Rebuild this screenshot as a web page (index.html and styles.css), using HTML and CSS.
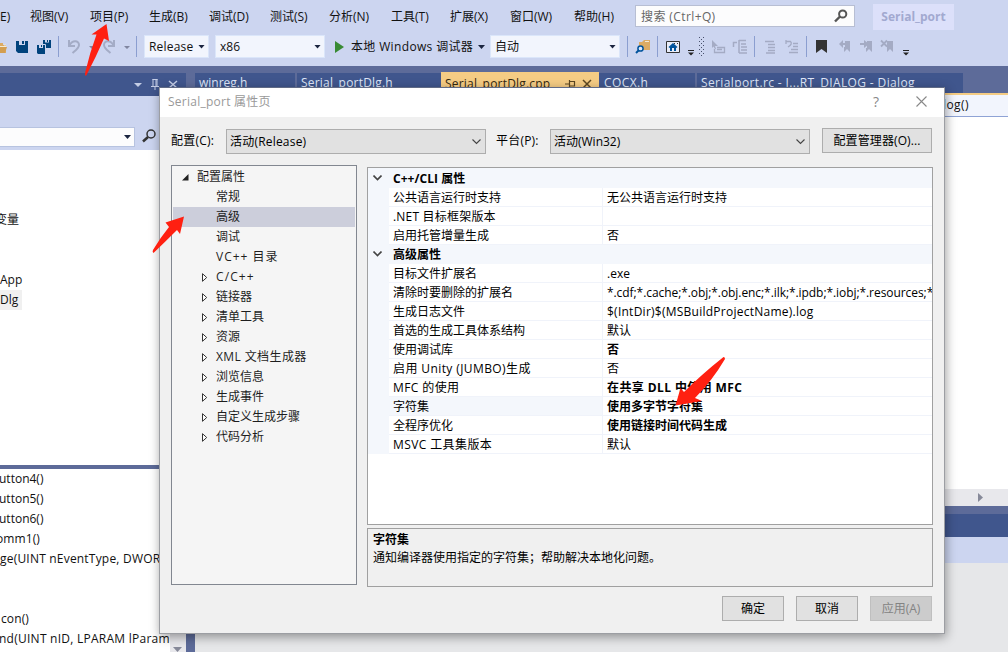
FILE: index.html
```html
<!DOCTYPE html>
<html lang="zh-CN">
<head>
<meta charset="utf-8">
<title>Serial_port 属性页</title>
<link rel="stylesheet" href="styles.css">
</head>
<body>
<div class="ide">
  <header class="top">
    <nav class="menu">
      <span class="m-edit">E)</span><span class="m60">视图(V)</span><span class="m59">项目(P)</span><span class="m60">生成(B)</span><span class="m61">调试(D)</span><span class="m59">测试(S)</span><span class="m62">分析(N)</span><span class="m59">工具(T)</span><span class="m60">扩展(X)</span><span class="m64">窗口(W)</span><span class="m61">帮助(H)</span>
      <div class="quick"><span class="sp4">搜索 (Ctrl+Q)</span>
        <svg width="14" height="14" viewBox="0 0 14 14"><circle cx="8.700" cy="5" r="3.600" fill="none" stroke="#555" stroke-width="2"/><path d="M6 7.500L1 12.500" stroke="#555" stroke-width="2.400"/></svg>
      </div>
      <b class="solution">Serial_port</b>
    </nav>
    <div class="tools">
      <svg class="icons-a" width="144" height="32" viewBox="0 0 144 32">
        <path d="M-2 10H3V12H6V20H-2Z" fill="#dcab63"/><path d="M0 14H7L5 20H0Z" fill="#d39e50"/><path d="M0 13.500H6M5 13V11" fill="none" stroke="#f4ead6"/>
        <path d="M16 8H28V20H18L16 18Z" fill="#00437d"/><path d="M19 8H25V12H19Z" fill="#ccd5f0"/><path d="M22 8H24V11H22Z" fill="#00437d"/>
        <path d="M43 7H51V15H43Z M37 12H45V21H38L37 20Z" fill="#00437d"/><path d="M45 7H49V9.500H45Z M39 12H43V15H39Z" fill="#ccd5f0"/><path d="M47 7H48V9H47Z M41 12H42V14H41Z" fill="#00437d"/><path d="M42.500 11V11.500H45.500V15.500H48" fill="none" stroke="#ccd5f0"/>
        <path d="M58.500 3V24M136.500 3V24" stroke="#8b9ed0"/>
        <path d="M69 7V13H75M69.500 12.500C72 7 79 7 79 12C79 15 76 17 72.500 20" fill="none" stroke="#a4acc6" stroke-width="2"/>
        <path d="M114 7V13H108M113.500 12.500C111 7 104 7 104 12C104 15 107 17 110.500 20" fill="none" stroke="#a4acc6" stroke-width="2"/>
        <path d="M89 13H95L92 16ZM124 13H130L127 16Z" fill="#8086a0"/>
      </svg>
      <div class="drop rel"><span class="sp2">Release</span><i class="tri"></i></div>
      <div class="drop x86"><span>x86</span><i class="tri"></i></div>
      <svg class="play" width="10" height="12" viewBox="0 0 10 12"><path d="M0 0L9 6L0 12Z" fill="#388a34"/></svg>
      <span class="debug">本地 Windows 调试器</span><i class="tri tri-debug"></i>
      <div class="drop auto"><span>自动</span><i class="tri"></i></div>
      <svg class="icons-b" width="290" height="32" viewBox="0 0 290 32">
        <path d="M7.500 3V24M37.500 3V24M134.500 3V24M186.500 3V24" stroke="#8b9ed0"/>
        <path d="M19 9H22L24 7H30V17H19Z" fill="#dcab63"/><path d="M25 8.500H29" stroke="#f4ead6"/><circle cx="20.500" cy="15.500" r="2.600" fill="#dbe7fa" stroke="#00539c" stroke-width="1.500"/><path d="M18.500 17.500L16 20" stroke="#00539c" stroke-width="2"/>
        <path d="M46.500 8.500H59.500V19.500H46.500Z" fill="#e8ecf8" stroke="#333"/><path d="M54 10.500H55M57 10.500H58" stroke="#333"/><path d="M49 14.500L53 11L57 14.500" fill="none" stroke="#00539c" stroke-width="1.500"/><path d="M50 14L53 11.500L56 14V18H54V15H52V18H50Z" fill="#00539c"/>
        <path d="M68 17.500H74" stroke="#222"/><path d="M68 19.500H74L71 22.500Z" fill="#222"/>
        <path d="M79.500 4V23M83.500 4V23" stroke="#48506c" stroke-dasharray="1 3"/><path d="M81.500 6V24" stroke="#48506c" stroke-dasharray="1 3"/>
        <path d="M92 7L98 13H95L96 16H95L93.500 13.500L92 15Z" fill="#a4abc4"/>
        <g stroke="#a4abc4" fill="none"><path d="M97 14.500H104.500V19.500H94.500V16M97 16.500H102" stroke-width="1.300"/><path d="M113.500 14V9.500H117M119 7.500H126M119 7V20M121 11H126M121 14H127M121 17H127M119 20H127" stroke-width="1.500"/><path d="M145 8.500H154M148 11.500H155M148 14.500H155M148 17.500H155M146 20H155" stroke-width="1.300"/><path d="M166 8.500H170.500Q173 11 168 14M166 7V11M173 10.500H178M173 13.500H178M171 16.500H178M169 19.500H178" stroke-width="1.300"/></g>
        <path d="M196 7H207V20L201.500 16L196 20Z" fill="#333"/>
        <g fill="#a4abc4"><path d="M225 8H230V19L227 16L224 19V14H225Z M219 11L223 7V10H226V12H223V15Z"/><path d="M247 8H252V19L249 16L246 19V15H247Z M240 10H244V7L249 11L244 15V12H240Z"/><path d="M267 8H273V19L270 16L267 19Z"/></g><path d="M261 7.500L267 13.500M267 7.500L261 13.500" stroke="#a4abc4" stroke-width="1.800"/>
        <path d="M283 17.500H289" stroke="#222"/><path d="M283 19.500H289L286 22.500Z" fill="#222"/>
      </svg>
    </div>
  </header>
  <main class="work">
    <aside class="side">
      <div class="side-head">
        <svg width="52" height="23" viewBox="0 0 52 23"><path d="M0 10H8L4 14Z" fill="#c4cde6"/><path d="M18.500 6.500H23.500M19 6V13M23 6V13M22 6V13M17 13.500H25M21 14V17" fill="none" stroke="#c4cde6"/><path d="M35 8L43 15M43 8L35 15" stroke="#c4cde6" stroke-width="1.500"/></svg>
      </div>
      <div class="side-search">
        <div class="side-input"><i class="tri"></i></div>
        <svg width="15" height="16" viewBox="0 0 15 16"><circle cx="9" cy="7" r="4" fill="none" stroke="#333" stroke-width="1.500"/><path d="M6 10L1 14.500" stroke="#333" stroke-width="2.500"/></svg>
      </div>
      <div class="classes"><p class="var">变量</p><p>App</p><p><span class="picked">Dlg</span></p></div>
      <div class="members">
        <div class="lines"><p class="pull">utton4()</p><p class="pull">utton5()</p><p class="pull">utton6()</p><p class="pull more">omm1()</p><p class="sp2">ge(UINT nEventType, DWORD</p><p></p><p></p><p class="icon-line">con()</p><p class="handler">nd(UINT nID, LPARAM lParam</p></div>
        <div class="vbar"><i></i></div>
      </div>
    </aside>
    <section class="editor">
      <div class="tabs">
        <div class="tab t1">winreg.h</div><div class="tab t2 sp2">Serial_portDlg.h</div>
        <div class="tab t3"><span class="sp2">Serial_portDlg.cpp</span><svg width="32" height="14" viewBox="0 0 32 14"><path d="M0 7H4M4.500 3V11M5 4.500H9.500V9H5" fill="none" stroke="#5c4620" stroke-width="1.200"/><path d="M18 3L26 11M26 3L18 11" stroke="#5c4620" stroke-width="1.500"/></svg></div>
        <div class="tab t4">COCX.h</div><div class="tab t5">Serialport.rc - I...RT_DIALOG - Dialog</div>
      </div>
      <div class="navline">log()</div>
      <div class="code"></div>
      <div class="hbar"><i></i></div>
      <div class="out-gap"></div><div class="out-head"></div><div class="out-tools"></div><div class="out"></div>
    </section>
  </main>
</div>

<div class="dialog">
  <div class="title"><span>Serial_port 属性页</span><em>?</em>
    <svg width="11" height="11" viewBox="0 0 11 11"><path d="M.5 .5L10.500 10.500M10.500 .5L.5 10.500" stroke="#888" stroke-width="1.100"/></svg></div>
  <div class="config">
    <label class="l1 sp2">配置(C):</label>
    <div class="select"><span class="sp2">活动(Release)</span><svg width="9" height="6" viewBox="0 0 9 6"><path d="M.5 .5L4.500 4.500L8.500 .5" fill="none" stroke="#444" stroke-width="1.100"/></svg></div>
    <label class="l2 sp2">平台(P):</label>
    <div class="select"><span>活动(Win32)</span><svg width="9" height="6" viewBox="0 0 9 6"><path d="M.5 .5L4.500 4.500L8.500 .5" fill="none" stroke="#444" stroke-width="1.100"/></svg></div>
    <div class="btn manager">配置管理器(O)...</div>
  </div>
  <div class="panes">
    <div class="tree">
      <div class="node root"><svg width="7" height="7" viewBox="0 0 7 7"><path d="M6.500 0V6.500H0Z" fill="#222"/></svg>配置属性</div>
      <div class="node">常规</div><div class="node on">高级</div><div class="node">调试</div><div class="node vc">VC++ 目录</div>
      <div class="node kid wide"><svg width="6" height="9" viewBox="0 0 6 9"><path d="M.5 .7V8.300L4.700 4.500Z" fill="#fff" stroke="#333"/></svg>C/C++</div>
      <div class="node kid"><svg width="6" height="9" viewBox="0 0 6 9"><path d="M.5 .7V8.300L4.700 4.500Z" fill="#fff" stroke="#333"/></svg>链接器</div>
      <div class="node kid"><svg width="6" height="9" viewBox="0 0 6 9"><path d="M.5 .7V8.300L4.700 4.500Z" fill="#fff" stroke="#333"/></svg>清单工具</div>
      <div class="node kid"><svg width="6" height="9" viewBox="0 0 6 9"><path d="M.5 .7V8.300L4.700 4.500Z" fill="#fff" stroke="#333"/></svg>资源</div>
      <div class="node kid sp4"><svg width="6" height="9" viewBox="0 0 6 9"><path d="M.5 .7V8.300L4.700 4.500Z" fill="#fff" stroke="#333"/></svg>XML 文档生成器</div>
      <div class="node kid"><svg width="6" height="9" viewBox="0 0 6 9"><path d="M.5 .7V8.300L4.700 4.500Z" fill="#fff" stroke="#333"/></svg>浏览信息</div>
      <div class="node kid"><svg width="6" height="9" viewBox="0 0 6 9"><path d="M.5 .7V8.300L4.700 4.500Z" fill="#fff" stroke="#333"/></svg>生成事件</div>
      <div class="node kid"><svg width="6" height="9" viewBox="0 0 6 9"><path d="M.5 .7V8.300L4.700 4.500Z" fill="#fff" stroke="#333"/></svg>自定义生成步骤</div>
      <div class="node kid"><svg width="6" height="9" viewBox="0 0 6 9"><path d="M.5 .7V8.300L4.700 4.500Z" fill="#fff" stroke="#333"/></svg>代码分析</div>
    </div>
    <div class="right">
      <div class="props">
        <div class="group g1"><svg width="9" height="6" viewBox="0 0 9 6"><path d="M.5 .5L4.500 4.500L8.500 .5" fill="none" stroke="#444" stroke-width="1.600"/></svg><span class="cli">C++/CLI 属性</span></div>
        <div class="row"><span>公共语言运行时支持</span><span>无公共语言运行时支持</span></div>
        <div class="row"><span class="sp2">.NET 目标框架版本</span><span></span></div>
        <div class="row"><span>启用托管增量生成</span><span>否</span></div>
        <div class="group"><svg width="9" height="6" viewBox="0 0 9 6"><path d="M.5 .5L4.500 4.500L8.500 .5" fill="none" stroke="#444" stroke-width="1.600"/></svg>高级属性</div>
        <div class="row"><span>目标文件扩展名</span><span>.exe</span></div>
        <div class="row"><span>清除时要删除的扩展名</span><span class="ext">*.cdf;*.cache;*.obj;*.obj.enc;*.ilk;*.ipdb;*.iobj;*.resources;*</span></div>
        <div class="row"><span>生成日志文件</span><span class="log">$(IntDir)$(MSBuildProjectName).log</span></div>
        <div class="row"><span>首选的生成工具体系结构</span><span>默认</span></div>
        <div class="row"><span>使用调试库</span><span class="bold">否</span></div>
        <div class="row"><span class="sp4">启用 Unity (JUMBO)生成</span><span>否</span></div>
        <div class="row"><span class="sp4">MFC 的使用</span><span class="bold sp4">在共享 DLL 中使用 MFC</span></div>
        <div class="row picked-row"><span>字符集</span><span class="bold">使用多字节字符集</span></div>
        <div class="row"><span>全程序优化</span><span class="bold">使用链接时间代码生成</span></div>
        <div class="row"><span class="sp4">MSVC 工具集版本</span><span>默认</span></div>
      </div>
      <div class="desc"><b>字符集</b><span>通知编译器使用指定的字符集；帮助解决本地化问题。</span></div>
    </div>
  </div>
  <div class="actions"><div class="btn">确定</div><div class="btn">取消</div><div class="btn off">应用(A)</div></div>
</div>

<svg class="arrows" width="1008" height="652" viewBox="0 0 1008 652" fill="#ff2011">
  <path d="M106.500 24L109 41L104 38.500Q96 57 86 76Q84.500 75 85.300 72Q90 52 96.500 34.500L91.500 34.500Z"/>
  <path d="M184 216.500L180 234L177 230Q165 242 153.500 253Q152 252 153 250Q160 238 169 227L165.500 222.500Z"/>
  <path d="M675.500 405.500L680.500 388L684 392Q702 374 723.500 357Q725 357 725 359Q712 381 695 398L702 401Z"/>
</svg>
</body>
</html>
```
FILE: styles.css
```css
* { box-sizing: border-box; }
body { margin: 0; width: 1008px; height: 652px; overflow: hidden; position: relative; font: 12px/20px "Open Sans", "Noto Sans CJK SC", sans-serif; color: #111; white-space: nowrap; }
p { margin: 0; height: 20px; }
svg { flex: none; display: block; }
.sp2 { letter-spacing: .2px; }
.sp4 { letter-spacing: .4px; }
.ide { display: flex; flex-direction: column; height: 652px; background: #5d6b99; }
.top { height: 66px; flex: none; background: #ccd5f0; }
.menu { display: flex; height: 33px; padding-top: 4px; line-height: 25px; }
.menu > * { flex: none; }
.m-edit { width: 30px; }
.m59 { width: 59px; } .m60 { width: 60px; } .m61 { width: 61px; } .m62 { width: 62px; } .m64 { width: 64px; }
.quick { display: flex; align-items: center; justify-content: space-between; width: 220px; height: 22px; margin-top: 1px; padding: 0 6px 0 5px; background: #fcfcfd; border: 1px solid #b7bed3; color: #666; }
.solution { width: 81px; height: 26px; margin-left: 18px; text-align: center; background: #dce0fa; color: #a2a9d0; }
.tools { display: flex; height: 33px; }
.tools > * { flex: none; }
.drop { display: flex; align-items: center; justify-content: space-between; height: 23px; margin-top: 2px; padding: 0 3px 0 4px; background: #f2f5fd; border: 1px solid #dbe6fa; }
.rel { width: 65px; } .x86 { width: 110px; margin-left: 6px; } .auto { width: 130px; margin-left: 6px; }
.tri { width: 7px; height: 4px; background: #1b2540; clip-path: polygon(0 0, 100% 0, 50% 100%); }
.play { margin: 8px 6px 0 10px; }
.debug { width: 127px; line-height: 27px; letter-spacing: .35px; }
.tri-debug { margin-top: 12px; }
.auto { margin-left: 5px; }
.work { display: flex; flex: 1; min-height: 0; padding-top: 7px; }
.side { display: flex; flex-direction: column; width: 186px; margin-right: 9px; }
.side-head { display: flex; justify-content: flex-end; height: 23px; flex: none; background: #40568d; }
.side-search { display: flex; height: 54px; flex: none; padding-top: 31px; background: #ccd5f0; }
.side-input { display: flex; align-items: center; justify-content: flex-end; width: 135px; height: 20px; margin-right: 7px; padding-right: 3px; background: #fcfcfd; border: 1px solid #b7c3e0; border-left: 0; }
.classes { height: 315px; flex: none; padding-top: 60px; background: #fff; }
.var { height: 60px; margin-left: -5px; }
.picked { display: inline-block; width: 22px; background: #f0f0f0; }
.members { display: flex; flex: 1; margin-top: 4px; background: #fff; }
.lines { width: 170px; overflow: hidden; }
.pull { margin-left: -1px; }
.more { margin-left: -4px; letter-spacing: .1px; }
.handler { margin-left: -1px; letter-spacing: .25px; }
.icon-line { padding-left: 1px; letter-spacing: .1px; }
.vbar { flex: 1; padding: 178px 0 0 3px; background: #e8e8ec; }
.vbar i { display: block; width: 9px; height: 5px; background: #868999; clip-path: polygon(0 0, 100% 0, 50% 100%); }
.editor { display: flex; flex-direction: column; flex: 1; min-width: 0; }
.tabs { display: flex; height: 20px; flex: none; color: #dfe6f8; }
.tab { flex: none; height: 20px; padding-left: 4px; background: #40568d; }
.t1 { width: 100px; margin-right: 2px; } .t2 { width: 144px; }
.t3 { display: flex; align-items: center; justify-content: space-between; width: 158px; height: 22px; margin-top: -1px; padding: 2px 2px 0 4px; background: #f5cc84; color: #33270f; }
.t4 { width: 96px; margin-right: 2px; padding-left: 5px; letter-spacing: .4px; } .t5 { width: 266px; letter-spacing: .37px; }
.navline { height: 24px; flex: none; padding-left: 748px; background: #f2f5fd; border-top: 2px solid #f5cc84; border-bottom: 1px solid #8fa3d5; letter-spacing: .4px; }
.code { height: 372px; flex: none; background: #fff; }
.hbar { height: 17px; flex: none; padding: 4px 0 0 783px; background: #e8e8ec; }
.hbar i { display: block; width: 5px; height: 9px; background: #868999; clip-path: polygon(0 0, 100% 50%, 0 100%); }
.out-gap { height: 8px; }
.out-head { height: 23px; background: #40568d; }
.out-tools { height: 26px; background: #ccd5f0; }
.out { flex: 1; background: #e6e7e9; }

.dialog { position: absolute; left: 159px; top: 87px; width: 786px; height: 547px; display: flex; flex-direction: column; background: #f0f0f0; border: 1px solid #9c9ea3; border-top-color: #606a85; box-shadow: 1px 3px 10px rgba(0, 0, 0, .38); color: #000; }
.title { display: flex; height: 29px; flex: none; padding-left: 8px; background: #fff; color: #999; line-height: 28px; }
.title span { width: 705px; letter-spacing: .25px; }
.title em { width: 43px; font-style: normal; font-size: 14px; line-height: 27px; color: #888; }
.title svg { margin-top: 8px; }
.config { display: flex; height: 48px; flex: none; padding: 11px 0 0 11px; line-height: 25px; }
.config > * { flex: none; }
.l1 { width: 55px; } .l2 { width: 64px; padding-left: 10px; }
.select { display: flex; align-items: center; justify-content: space-between; width: 260px; height: 25px; margin-top: 1px; padding: 0 4px 0 3px; background: #e1e1e1; border: 1px solid #adadad; }
.btn { width: 62px; height: 25px; line-height: 23px; text-align: center; background: #e1e1e1; border: 1px solid #adadad; }
.manager { width: 110px; margin-left: 12px; letter-spacing: .1px; }
.off { background: #ccc; border-color: #bfbfbf; color: #838383; }
.panes { display: flex; height: 422px; flex: none; padding-left: 11px; }
.tree { width: 186px; height: 420px; margin-right: 10px; padding: 1px; background: #f5f5f5; border: 1px solid #828790; color: #1e1e1e; }
.node { display: flex; align-items: center; height: 20px; padding-left: 43px; }
.node.kid { padding-left: 29px; }
.node.kid svg { margin-right: 8px; }
.node.root { padding-left: 9px; }
.node.root svg { margin-right: 8px; }
.node.on { background: #cccedb; }
.node.vc { letter-spacing: 1px; }
.node.wide { letter-spacing: 1.100px; }
.right { padding-top: 2px; }
.props { width: 566px; height: 358px; background: #fff; border: 1px solid #a0a0a0; overflow: hidden; line-height: 20px; }
.group { display: flex; height: 19px; padding-left: 5px; background: #f4f7fc; font-weight: 700; }
.group.g1 { height: 20px; padding-top: 1px; }
.cli { letter-spacing: .05px; }
.group svg { margin: 6px 11px 0 0; }
.row { display: flex; height: 19px; border-left: 21px solid #f4f7fc; }
.row > span { width: 214px; height: 19px; padding-left: 4px; border-bottom: 1px solid #f0f3fa; border-right: 1px solid #f0f3fa; }
.row > span + span { width: 329px; border-right: 0; }
.ext { letter-spacing: -.07px; }
.log { letter-spacing: .25px; }
.picked-row > span:first-child { background: #f4f7fc; }
.bold { font-weight: 700; }
.desc { display: flex; flex-direction: column; width: 566px; height: 59px; margin-top: 3px; padding: 2px 5px; border: 1px solid #a0a0a0; line-height: 18px; }
.actions { display: flex; gap: 12px; padding: 9px 0 0 562px; }
.arrows { position: absolute; left: 0; top: 0; }
```
